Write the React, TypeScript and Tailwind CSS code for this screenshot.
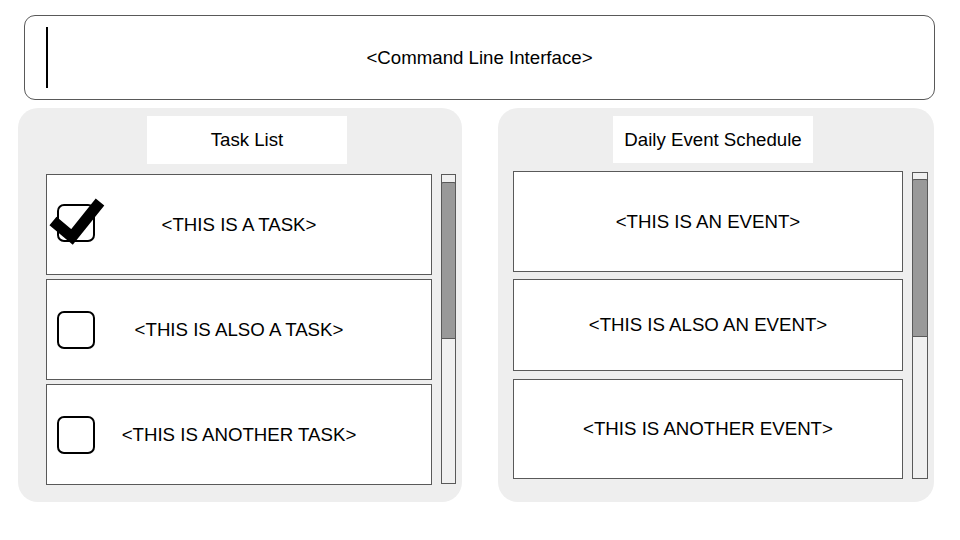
// App.tsx - planner wireframe: CLI bar, task list and daily event schedule

import React from 'react';

const FONT = { fontFamily: '"Liberation Sans", Arial, sans-serif' };

// Checkbox drawing, checked or empty
const TaskCheck: React.FC<{ checked: boolean }> = ({ checked }) => (
    <svg
        width="50"
        height="50"
        viewBox="0 0 50 50"
        overflow="visible"
        className="absolute left-[5px] top-1/2 -translate-y-1/2 overflow-visible"
    >
        <rect x="6" y={checked ? 5 : 7} width="36" height="36" rx="6" fill="white" stroke="black" strokeWidth="2" />
        {checked && (
            <polyline
                points="1,21 20,37 48,2"
                fill="none"
                stroke="black"
                strokeWidth="11"
                strokeLinecap="butt"
                strokeLinejoin="miter"
            />
        )}
    </svg>
);

// Fake scrollbar track + thumb
const ScrollBar: React.FC<{ width: string; height: string; thumbTop: string; thumbHeight: string }> = ({
    width,
    height,
    thumbTop,
    thumbHeight,
}) => (
    <div className={`${width} ${height} border border-[#595959] bg-[#f0f0f0] flex flex-col`}>
        <div className={`${thumbTop} ${thumbHeight} -mx-px rounded-t-[2px] border border-[#595959] bg-[#999999]`} />
    </div>
);

const tasks = [
    { label: '<THIS IS A TASK>', done: true },
    { label: '<THIS IS ALSO A TASK>', done: false },
    { label: '<THIS IS ANOTHER TASK>', done: false },
];

const events = [
    { label: '<THIS IS AN EVENT>', height: 'h-[101px]' },
    { label: '<THIS IS ALSO AN EVENT>', height: 'h-[92px] mt-[7px]' },
    { label: '<THIS IS ANOTHER EVENT>', height: 'h-[100px] mt-[8px]' },
];

export default function App() {
    return (
        <div className="w-[960px] h-[540px] bg-white pt-[15px] text-black text-[18.67px]" style={FONT}>
            {/* Command line */}
            <div className="relative ml-[24px] w-[911px] h-[85px] rounded-[11px] border border-[#595959] flex items-center justify-center">
                <div className="absolute left-[21px] top-[11px] w-[1.5px] h-[61px] bg-black" />
                <span>&lt;Command Line Interface&gt;</span>
            </div>

            <div className="flex mt-[8px] pl-[18px] gap-[36px]">
                {/* Task list panel */}
                <div className="w-[444px] h-[394px] rounded-[20px] bg-[#eeeeee] pt-[8px]">
                    <div className="ml-[129px] w-[200px] h-[48px] bg-white flex items-center justify-center">Task List</div>
                    <div className="flex mt-[10px] pl-[28px]">
                        <div className="w-[386px] flex flex-col gap-[4px]">
                            {tasks.map((t) => (
                                <div
                                    key={t.label}
                                    className="relative h-[101px] bg-white border border-[#595959] flex items-center justify-center"
                                >
                                    <TaskCheck checked={t.done} />
                                    <span>{t.label}</span>
                                </div>
                            ))}
                        </div>
                        <div className="ml-[9px]">
                            <ScrollBar width="w-[15px]" height="h-[310px]" thumbTop="mt-[7px]" thumbHeight="h-[157px]" />
                        </div>
                    </div>
                </div>

                {/* Event schedule panel */}
                <div className="w-[436px] h-[394px] rounded-[20px] bg-[#eeeeee] pt-[8px]">
                    <div className="ml-[115px] w-[200px] h-[47px] bg-white flex items-center justify-center">
                        Daily Event Schedule
                    </div>
                    <div className="flex mt-[8px] pl-[15px]">
                        <div className="w-[390px] flex flex-col">
                            {events.map((e) => (
                                <div
                                    key={e.label}
                                    className={`${e.height} bg-white border border-[#595959] flex items-center justify-center`}
                                >
                                    <span>{e.label}</span>
                                </div>
                            ))}
                        </div>
                        <div className="ml-[9px] mt-[1px]">
                            <ScrollBar width="w-[16px]" height="h-[307px]" thumbTop="mt-[6px]" thumbHeight="h-[158px]" />
                        </div>
                    </div>
                </div>
            </div>
        </div>
    );
}
